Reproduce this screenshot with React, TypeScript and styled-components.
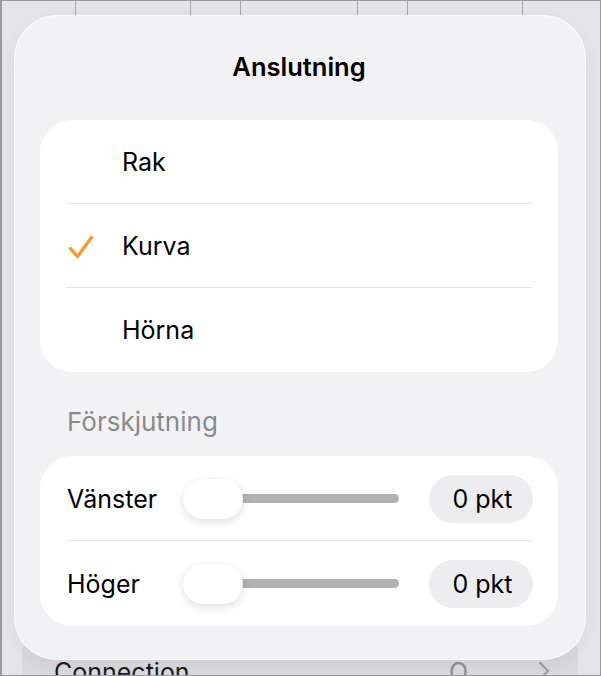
import styled, { createGlobalStyle } from "styled-components"

const GlobalStyle = createGlobalStyle`
  html, body {
    margin: 0;
    padding: 0;
    background: #e6e6e9;
  }
  body {
    font-family: Inter, "Noto Sans", "Liberation Sans", sans-serif;
    -webkit-font-smoothing: antialiased;
  }
`

const gridLines = [73, 188, 238, 355, 405, 520]

const Check = () => (
  <svg width="26" height="24" viewBox="0 0 26 24" fill="none">
    <path
      d="M2.5 13.5 L9.5 21.5 L23.5 2.5"
      stroke="#fb9a2b"
      strokeWidth="3.4"
      strokeLinecap="round"
      strokeLinejoin="round"
    />
  </svg>
)

const Chevron = () => (
  <svg width="12" height="20" viewBox="0 0 12 20" fill="none">
    <path d="M2 2 L10 10 L2 18" stroke="#a0a0a5" strokeWidth="2.4" strokeLinecap="round" strokeLinejoin="round" />
  </svg>
)

const options = [
  { label: "Rak", checked: false },
  { label: "Kurva", checked: true },
  { label: "Hörna", checked: false },
]

const offsets = ["Vänster", "Höger"]

const App = () => {
  return (
    <Screen>
      <GlobalStyle />
      <Backdrop>
        <HeaderStrip>
          {gridLines.map((x) => (
            <GridLine key={x} style={{ left: x }} />
          ))}
        </HeaderStrip>
        <Spacer />
        <BottomRow>
          <BottomLabel>Connection</BottomLabel>
          <BottomRight>
            <BottomValue>O</BottomValue>
            <Chevron />
          </BottomRight>
        </BottomRow>
      </Backdrop>

      <Popover>
        <Title>Anslutning</Title>
        <Card>
          {options.map((o, i) => (
            <OptionRow key={o.label} $last={i === options.length - 1}>
              <CheckSlot>{o.checked && <Check />}</CheckSlot>
              <OptionLabel>{o.label}</OptionLabel>
            </OptionRow>
          ))}
        </Card>
        <SectionHeader>Förskjutning</SectionHeader>
        <Card>
          {offsets.map((label, i) => (
            <SliderRow key={label} $last={i === offsets.length - 1}>
              <SliderLabel>{label}</SliderLabel>
              <Slider>
                <Track />
                <Thumb />
              </Slider>
              <ValuePill>0 pkt</ValuePill>
            </SliderRow>
          ))}
        </Card>
      </Popover>
    </Screen>
  )
}

const Screen = styled.div`
  position: relative;
  width: 601px;
  height: 676px;
  overflow: hidden;
  box-sizing: border-box;
  border: 1px solid #9a9a9e;
  border-left-width: 2px;
  background: #e5e5e8;
`

const Backdrop = styled.div`
  display: flex;
  flex-direction: column;
  height: 100%;
`

const HeaderStrip = styled.div`
  position: relative;
  height: 16px;
  flex: none;
`

const GridLine = styled.div`
  position: absolute;
  top: 0;
  width: 1px;
  height: 100%;
  background: #a6a6aa;
`

const Spacer = styled.div`
  flex: 1;
`

const BottomRow = styled.div`
  display: flex;
  align-items: flex-start;
  justify-content: space-between;
  height: 18px;
  margin: 0 22px 0 20px;
  padding: 10px 28px 0 32px;
  background: #d9d9dd;
  overflow: hidden;
`

const BottomLabel = styled.div`
  font-size: 25px;
  line-height: 30px;
  color: #1c1c1e;
`

const BottomRight = styled.div`
  display: flex;
  align-items: flex-start;
  gap: 70px;
  padding-top: 4px;
`

const BottomValue = styled.div`
  font-size: 25px;
  line-height: 30px;
  color: #8e8e93;
  margin-top: -4px;
`

const Popover = styled.div`
  position: absolute;
  top: 15px;
  left: 13px;
  width: 570px;
  height: 643px;
  box-sizing: border-box;
  padding: 0 27px 0 25px;
  border-radius: 42px;
  background: #f2f2f4;
  box-shadow: 0 0 0 1px rgba(255, 255, 255, 0.9), 0 4px 18px rgba(0, 0, 0, 0.06);
  display: flex;
  flex-direction: column;
`

const Title = styled.div`
  height: 104px;
  display: flex;
  align-items: center;
  justify-content: center;
  padding-bottom: 3px;
  box-sizing: border-box;
  font-size: 25.5px;
  font-weight: 600;
  color: #000;
`

const Card = styled.div`
  background: #ffffff;
  border-radius: 32px;
  overflow: hidden;
`

const OptionRow = styled.div<{ $last: boolean }>`
  position: relative;
  display: flex;
  align-items: center;
  height: 84px;
  padding-left: 28px;
  ${(p) =>
    !p.$last &&
    `
    &::after {
      content: "";
      position: absolute;
      left: 26px;
      right: 25px;
      bottom: 0;
      height: 1px;
      background: #e3e3e6;
    }
  `}
`

const CheckSlot = styled.div`
  width: 54px;
  display: flex;
  align-items: center;
  padding-top: 2px;
`

const OptionLabel = styled.div`
  font-size: 25px;
  color: #000;
`

const SectionHeader = styled.div`
  height: 84px;
  display: flex;
  align-items: center;
  padding-left: 27px;
  padding-top: 14px;
  box-sizing: border-box;
  font-size: 26px;
  color: #8a8a8e;
`

const SliderRow = styled.div<{ $last: boolean }>`
  position: relative;
  display: flex;
  align-items: center;
  height: 85px;
  padding: 0 25px 0 27px;
  ${(p) =>
    !p.$last &&
    `
    &::after {
      content: "";
      position: absolute;
      left: 26px;
      right: 25px;
      bottom: 0;
      height: 1px;
      background: #e3e3e6;
    }
  `}
`

const SliderLabel = styled.div`
  width: 116px;
  font-size: 25px;
  color: #000;
`

const Slider = styled.div`
  position: relative;
  width: 216px;
  height: 42px;
  display: flex;
  align-items: center;
`

const Track = styled.div`
  margin-left: 30px;
  flex: 1;
  height: 9px;
  border-radius: 5px;
  background: #b2b2b4;
`

const Thumb = styled.div`
  position: absolute;
  left: 0;
  top: 1px;
  width: 60px;
  height: 40px;
  border-radius: 20px;
  background: #ffffff;
  box-shadow: 0 3px 10px rgba(0, 0, 0, 0.12), 0 0 1px rgba(0, 0, 0, 0.08);
`

const ValuePill = styled.div`
  margin-left: auto;
  width: 104px;
  height: 48px;
  box-sizing: border-box;
  border-radius: 24px;
  background: #ededef;
  display: flex;
  align-items: center;
  justify-content: center;
  padding-left: 3px;
  font-size: 25px;
  color: #000;
`

export default App
